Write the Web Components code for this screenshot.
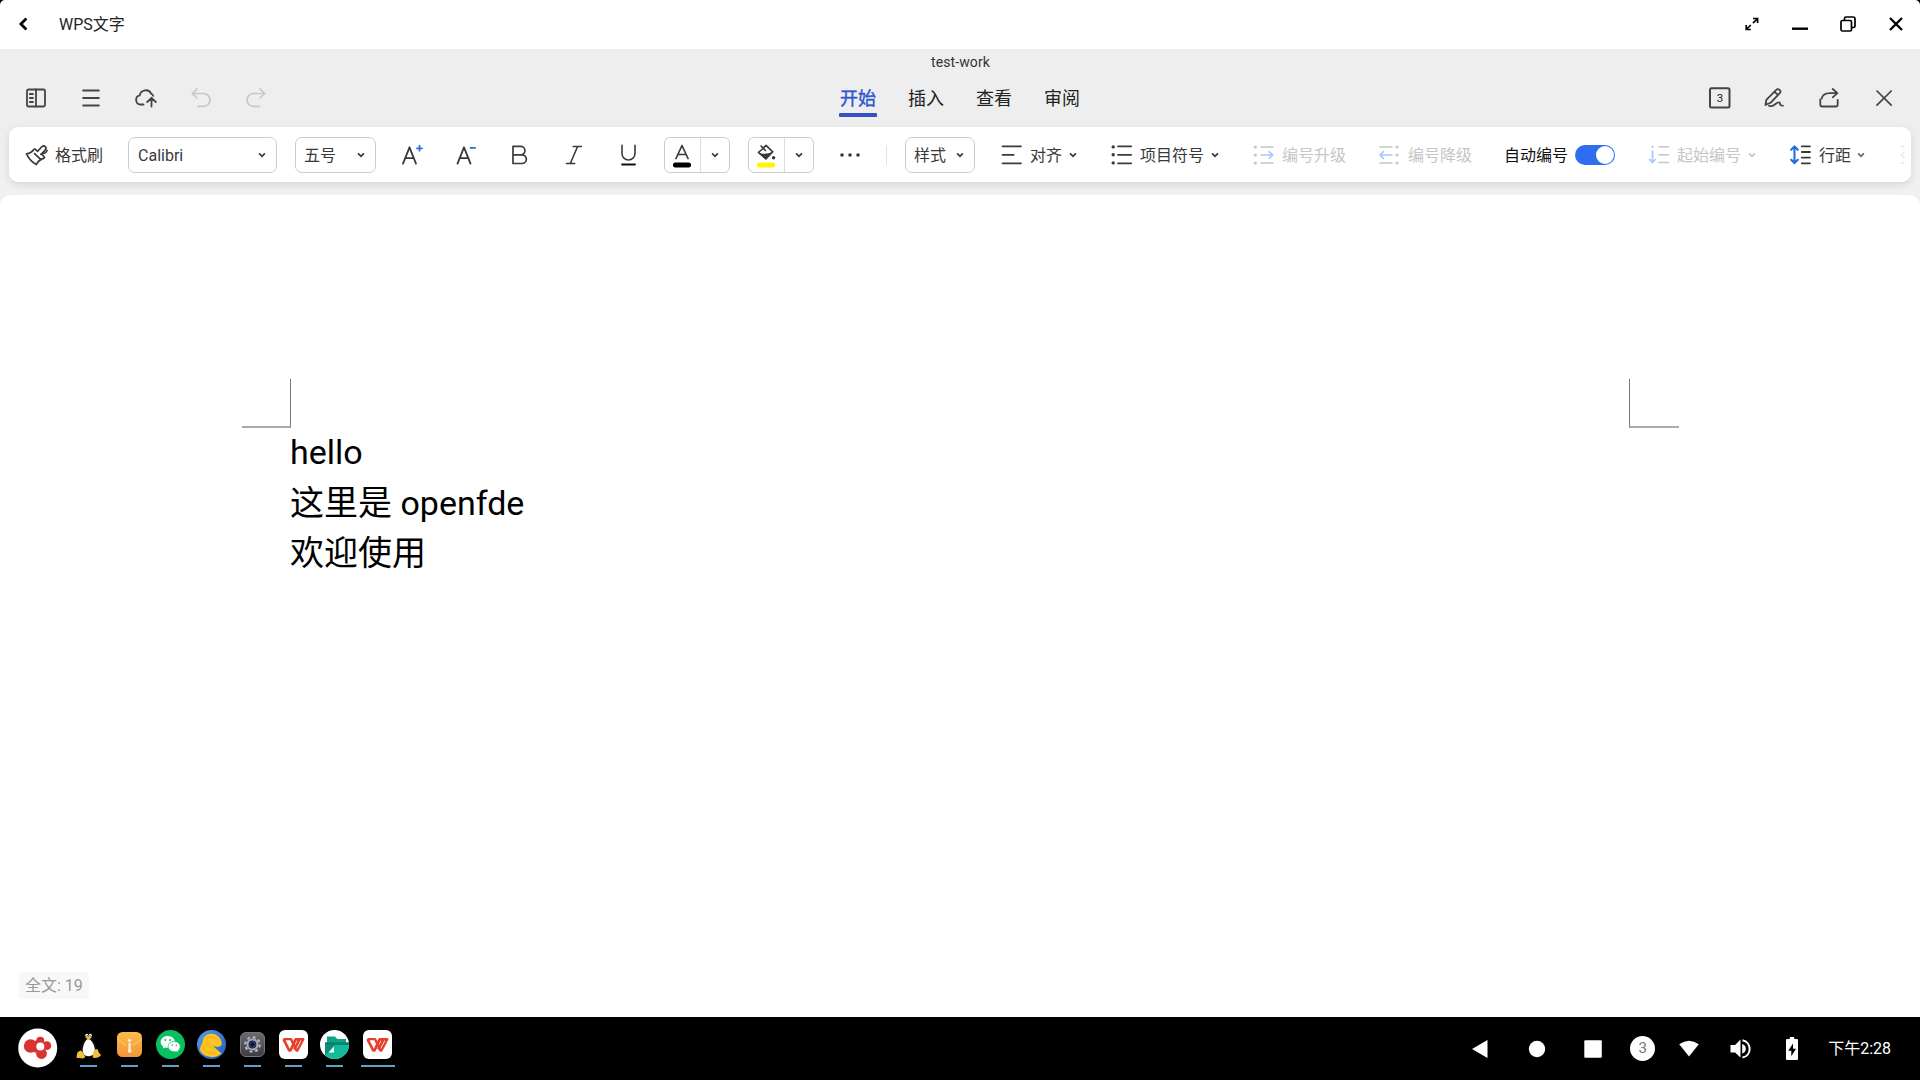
<!DOCTYPE html>
<html lang="zh-CN">
<head>
<meta charset="utf-8">
<title>WPS文字</title>
<style>
html,body{margin:0;height:100%;background:#000;overflow:hidden}
body{font-family:Roboto,"Noto Sans CJK SC",sans-serif;font-size:16px;line-height:1;color:#333}
</style>
</head>
<body>
<desk-screen></desk-screen>
<script>
const S='fill="none" stroke="currentColor" stroke-linecap="round" stroke-linejoin="round"';
const ICONS={
 back:[10,14,`<path d="M8.400 1.500 2.900 7l5.500 5.500" fill="none" stroke="currentColor" stroke-width="2.700"/>`],
 expand:[14,14,`<path d="M8 1.500h4.600V6M12.600 1.500 8 6.100M1.200 8v4.500h4.600M1.200 12.500 5.800 8" fill="none" stroke="currentColor" stroke-width="1.700"/>`],
 min:[16,14,`<path d="M0 11.700h16" stroke="currentColor" stroke-width="2.400"/>`],
 restore:[16,16,`<g fill="none" stroke="currentColor" stroke-width="1.700"><rect x="1" y="4.500" width="10.500" height="10.500" rx="1.500"/><path d="M4.500 4.500V2.500Q4.500 1 6 1h7.300Q15 1 15 2.700V10q0 1.500-1.500 1.500h-2"/></g>`],
 close:[14,14,`<path d="M1 1l12 12M13 1 1 13" fill="none" stroke="currentColor" stroke-width="2.300"/>`],
 side:[20,20,`<g ${S} stroke-width="1.800"><rect x="1" y="1.500" width="18" height="17" rx="1.500"/><path d="M10 1.500v17M3.800 6h3.200M3.800 10h3.200M3.800 14h3.200"/></g>`],
 menu:[18,18,`<path d="M1.200 1.500h15.600M1.200 9h15.600M1.200 16.500h15.600" ${S} stroke-width="2"/>`],
 cloud:[22,20,`<g ${S} stroke-width="1.800"><path d="M8.500 16.500H5.500A4.600 4.600 0 0 1 4.800 7.400 6 6 0 0 1 16.200 5.800c.4 0 1.800.8 2 2"/><path d="M16.500 18.500V10M12.200 14l4.300-4.200L20.800 14"/></g>`],
 undo:[20,20,`<g ${S} stroke-width="1.700"><path d="M6 .9 1.300 5.500 6 10"/><path d="M1.500 5.500H12.500a6.400 6.400 0 0 1 0 12.900H7"/></g>`],
 redo:[20,20,`<g ${S} stroke-width="1.700"><path d="M14 .9l4.700 4.600L14 10"/><path d="M18.500 5.500H7.500a6.400 6.400 0 0 0 0 12.900H13"/></g>`],
 pageno:[22,22,`<rect x="1" y="1.200" width="19.500" height="19.200" rx="1.500" ${S} stroke-width="2"/>`],
 pen:[22,20,`<g ${S} stroke-width="1.800"><path d="M1.500 17l.8-5.200L12 2.200a2.400 2.400 0 0 1 3.800 3L6.500 14.800zM10.300 3.700l3.800 3.200"/><path d="M5 17.700c5.500 2.500 7-4.700 10.500-3.200 1.600.8-1 3.300 3.400 3.200"/></g>`],
 share:[22,20,`<g ${S} stroke-width="1.800"><path d="M1.300 11.500v5q0 2 2 2h13.400q2 0 2-2V12"/><path d="M2.700 10.500C3.500 7 7 5.200 10.700 5.200h7.500M13.700 1l4.700 4.200-4.700 4.200"/></g>`],
 x:[16,16,`<path d="M1 1l14.200 14.200M15.200 1 1 15.200" ${S} stroke-width="1.700"/>`],
 chev:[8,6,`<path d="M1.100 1.400 4 4.300 6.900 1.400" fill="none" stroke="currentColor" stroke-width="1.700"/>`],
 brush:[22,22,`<g ${S} stroke-width="1.700" transform="translate(-.5 -.5)"><path d="M1 10.300c3.500-.3 5.500-1.800 7.300-4.300q.7-1 1.600-.1l2.300 1.900 4.100-4.500q1.800-1.800 3.400-.2 1.700 1.800-.1 3.600l-3.600 3.900 2.600 2.400q.8.800 0 1.600C15.500 15.500 12.500 17.500 10.800 21Q4.500 17.500 1 10.300z"/><path d="M15.300 10.800l4-1.300q1.700-.8 2.300-2.500M9 10.200l6.500 6"/></g>`],
 aplus:[22,20,`<path d="M1 18.600 7.500 2.300 14 18.600M3.300 13.200h8.500" ${S} stroke-width="1.800"/><path d="M14.300 3.300h6.400M17.500 .1v6.400" stroke="#2a6ed6" stroke-width="1.700"/>`],
 aminus:[22,20,`<path d="M1.500 18.600 8 2.300 14.500 18.600M3.800 13.200h8.500" ${S} stroke-width="1.800"/><path d="M13.800 2.800h6" stroke="#2a6ed6" stroke-width="1.700"/>`],
 bold:[17,20,`<path d="M2 1.300h7.700a4.200 4.200 0 0 1 0 8.500H2zM2 9.800h9a4.300 4.300 0 0 1 0 8.700H2z" ${S} stroke-width="1.700"/>`],
 ital:[18,20,`<path d="M8.200 1.500h8.200M1.500 18.500h8.200M12.600 1.500 5.300 18.500" ${S} stroke-width="1.600"/>`],
 under:[17,22,`<path d="M2 1.200v8.300a6.500 6.500 0 0 0 13 0V1.200" ${S} stroke-width="1.600"/><path d="M2 20.500h13" stroke="#111" stroke-width="1.800" stroke-linecap="round"/>`],
 color:[20,24,`<path d="M4 14.500 10 1.500l6 13M6.200 10.500h7.600" ${S} stroke-width="1.700"/><rect x="1" y="18.500" width="18" height="5" rx="2.300" fill="#000"/>`],
 fill:[20,24,`<path d="M5 2l4.500 4.500M5.300 6l4.700-4.600 6.800 6.400L9.900 15 2.500 8.300z" ${S} stroke-width="1.600"/><path d="M1.500 8.500q7.500 2.800 15-.5L10 15.500z" fill="currentColor"/><circle cx="17.600" cy="13.700" r="1.700" fill="currentColor"/><rect x="1" y="18.500" width="18" height="5" rx="2.300" fill="#fff500"/>`],
 dots:[22,6,`<g fill="currentColor"><circle cx="3" cy="3" r="1.800"/><circle cx="11" cy="3" r="1.800"/><circle cx="19" cy="3" r="1.800"/></g>`],
 align:[22,20,`<path d="M1.500 1.300h18.500M1.500 9.800h11.200M1.500 18.300h18.500" ${S} stroke-width="1.700"/>`],
 bullets:[22,20,`<path d="M7 1.300h13.200M7 9.800h13.200M7 18.300h13.200" ${S} stroke-width="1.700"/><g fill="currentColor"><circle cx="2.200" cy="1.900" r="1.700"/><circle cx="2.200" cy="9.800" r="1.700"/><circle cx="2.200" cy="17.900" r="1.700"/></g>`],
 numup:[22,20,`<path d="M8 2h12M8 18h12" ${S} stroke-width="1.600"/><g fill="currentColor"><circle cx="2.300" cy="2" r="1.600"/><circle cx="2.300" cy="10" r="1.600"/><circle cx="2.300" cy="18" r="1.600"/></g><path d="M7.500 10h12M15.700 6.200l4 3.800-4 3.800" fill="none" stroke="#a9c9fa" stroke-width="1.600"/>`],
 numdown:[22,20,`<path d="M2 2h12M2 18h12" ${S} stroke-width="1.600"/><g fill="currentColor"><circle cx="19" cy="2" r="1.600"/><circle cx="19" cy="10" r="1.600"/><circle cx="19" cy="18" r="1.600"/></g><path d="M2 10h12.500M6 6.200l-4 3.800 4 3.800" fill="none" stroke="#a9c9fa" stroke-width="1.600"/>`],
 start:[22,20,`<path d="M11 1.800h9.500M11 9.800h9.500M11 17.500h9.500" ${S} stroke-width="1.600"/><path d="M4.500 5.500v12M1.300 14l3.200 3.500L7.700 14M4.500 1v2" fill="none" stroke="#a9c9fa" stroke-width="1.800"/>`],
 spacing:[22,20,`<path d="M11.800 1.300h8.200M11.800 7h8.200M11.800 12.600h8.200M11.800 18.300h8.200" ${S} stroke-width="1.800"/><path d="M4.500 2v15.500M1.200 4.800 4.500 1.500l3.300 3.300M1.200 14.800l3.300 3.300 3.300-3.300" fill="none" stroke="#1f6fe0" stroke-width="2.100" stroke-linecap="round"/>`],
 more:[6,20,`<path d="M1 1.500h3.500M4.500 7 1 10l3.500 3M1 18h3.500" fill="none" stroke="currentColor" stroke-width="1.400"/>`],
 launcher:[40,40,`<circle cx="19.700" cy="20" r="19.500" fill="#fff"/><g fill="#d73430"><circle cx="12.600" cy="18" r="6.800"/><circle cx="22.300" cy="12.700" r="4"/><circle cx="28.800" cy="17.700" r="4.400"/><circle cx="23.500" cy="25.500" r="5.400"/><path d="M12 22l6 3 8-11-8-2z"/></g><circle cx="22.300" cy="18.600" r="4" fill="#fff"/>`],
 tux:[29,29,`<path d="M14.500 2.500c-3 0-3.600 2.500-3.400 5 .2 3-4.500 7-4.700 12 0 5 3.500 7.500 8.100 7.500s8.100-2.500 8.100-7.500c0-5-4.900-9-4.700-12 .2-2.500-.4-5-3.400-5z" fill="#111"/><path d="M14.300 9c-2.500 0-5.600 6.500-5.600 11s2.700 6.200 5.700 6.200 6.500-1.800 6.500-6.200S16.900 9 14.300 9z" fill="#fff"/><circle cx="12.800" cy="5.300" r="1.500" fill="#fff"/><circle cx="16.300" cy="5.300" r="1.500" fill="#fff"/><circle cx="13.100" cy="5.500" r=".6"/><circle cx="16" cy="5.500" r=".6"/><path d="M11.500 7.500q3-2.500 6.200 0l-3 2.500z" fill="#f5b921"/><path d="M3.500 22.200l3-1.700c2 1 4 4 4.700 6.300-1 2.700-4 1.200-8.200 1.200-1.300-1.500.3-3.500.5-5.800zM19.500 21.500c.5-2.500 2-1.500 4-2.500l1.300 3.400L27 25c-1 2-5 3.500-7 3-2-.5-1-4-.5-6.500z" fill="#f7bd38"/>`],
 mail:[29,29,`<defs><linearGradient id="g" x1="0" y1="0" x2="0" y2="1"><stop stop-color="#f9bc48"/><stop offset="1" stop-color="#f2953b"/></linearGradient></defs><rect x="2" y="2" width="25" height="25" rx="5.500" fill="url(#g)"/><path d="M2.500 9l9 6.500M26.500 9l-9 6.500" stroke="#fbcf78" stroke-width="1" fill="none"/><circle cx="14.600" cy="10.500" r="1.800" fill="#fbe6c4"/><path d="M14.600 13v9" stroke="#fdf0da" stroke-width="2.200"/><path d="M13 21h3.400" stroke="#fdf0da" stroke-width="3"/>`],
 wechat:[29,29,`<circle cx="14.500" cy="14.500" r="14.500" fill="#07c160"/><path d="M11.700 6C7.500 6 4.700 8.700 4.700 12c0 1.900 1 3.500 2.500 4.600l-.6 2 2.500-1.200c.8.200 1.700.3 2.600.3 4.200 0 7.200-2.500 7.200-5.700S15.900 6 11.700 6z" fill="#fff"/><path d="M18.400 11.400c-3.600 0-6.200 2.300-6.200 5.200s2.600 5.200 6.200 5.200c.8 0 1.400-.1 2.100-.3l2 1-.5-1.700c1.400-1 2.300-2.500 2.300-4.200 0-2.900-2.600-5.200-5.900-5.200z" fill="#fff" stroke="#07c160" stroke-width=".7"/><g fill="#07c160"><circle cx="9.300" cy="10" r="1"/><circle cx="14" cy="10" r="1"/><circle cx="16.300" cy="15.200" r=".8"/><circle cx="20.400" cy="15.200" r=".8"/></g>`],
 bird:[29,29,`<defs><linearGradient id="b" x1="0" y1="0" x2="1" y2="1"><stop stop-color="#5b9be8"/><stop offset="1" stop-color="#1f5fc4"/></linearGradient></defs><circle cx="14.500" cy="14.500" r="14.500" fill="url(#b)"/><path d="M2.800 20C3.500 15 5.800 13 6 10 6.500 6 11 3.200 15.500 3.800c5 .6 8.500 4.500 9.300 8.700l-.5 3.300-4 1.300-4.300-1.200 3.300 3.200 5.200 4.200c-2.500 2.800-6 4-10 3.700-5.500-.3-9.700-3-11.700-7z" fill="#fbc423"/><path d="M8.500 8.500c3.500-2.500 7.500-1.500 10.500.5M5.500 17c2 5 8 7 13 6M9 12.500c1 3.500 4 5.500 7 5.500" stroke="#f2b013" stroke-width="1" fill="none"/>`],
 gear:[29,29,`<defs><linearGradient id="k" x1="0" y1="0" x2="0" y2="1"><stop stop-color="#6c6c70"/><stop offset="1" stop-color="#3c3c40"/></linearGradient></defs><rect x="2.500" y="2.500" width="24" height="24" rx="5.500" fill="url(#k)" stroke="#77777b"/><circle cx="14.500" cy="14.500" r="7.300" fill="none" stroke="#b9bfcb" stroke-width="2" stroke-dasharray="2.870 2.870"/><circle cx="14.500" cy="14.500" r="5" fill="#16181f" stroke="#a0a8ba" stroke-width="2.200"/><circle cx="14.500" cy="14.500" r="2.800" fill="none" stroke="#3c4b9c" stroke-width="1"/>`],
 wps:[29,29,`<rect width="29" height="29" rx="6" fill="#fff"/><g fill="none" stroke="#e63f2c" stroke-linejoin="round"><path d="M4.500 9.200 10.200 20.500h1.200L16.700 9.300h3.800L15.300 19.500" stroke-width="2.700"/><path d="M4.500 9.100h8.300M12.200 9.500l5.200 11h1L24.300 9.200H20" stroke-width="2.400"/></g>`],
 files:[29,29,`<defs><clipPath id="c"><circle cx="14.500" cy="14.500" r="14.500"/></clipPath></defs><circle cx="14.500" cy="14.500" r="14.500" fill="#fff"/><g clip-path="url(#c)"><path d="M7 6.500h8l2.200 2.500H26v8H7z" fill="#10a487"/><path d="M5 13h25v17H5z" fill="#12bb9b"/><path d="M5 12.300h24v2.700H5z" fill="#0b7f6d"/><path d="M5 15v10l4-3 5.500-7z" fill="#0b8f79"/><path d="M14 16.500v6H8.500z" fill="#fff"/></g>`],
 tri:[18,20,`<path d="M1 10 16.500 1v18z" fill="#fff"/>`],
 dot:[18,18,`<circle cx="9" cy="9" r="8.200" fill="#fff"/>`],
 sq:[18,18,`<rect x=".3" y=".3" width="17.500" height="17.500" rx="1" fill="#fff"/>`],
 wifi:[20,18,`<path d="M.2 4.300Q10-2.800 19.800 4.300L10 16.500z" fill="#fff"/>`],
 vol:[22,22,`<path d="M.5 7h4.600L10.500 1.600v18L5.100 14.500H.5z" fill="#fff"/><path d="M12.200 6q3.600 1 3.600 4.800T12.200 15.500z" fill="#fff"/><path d="M12.500 2.200c9.500 2 9.500 15.500 0 17.300" fill="none" stroke="#fff" stroke-width="2"/>`],
 batt:[12,24,`<path d="M3.800 0h4.400v2H11q1 0 1 1v19q0 1-1 1H1q-1 0-1-1V3q0-1 1-1h2.800z" fill="#fff"/><path d="M7 6.500 2.200 13.700H5.300V19.300L10 11.800H7z" fill="#000"/>`]
};
class UiIcon extends HTMLElement{
 constructor(){super();this.attachShadow({mode:'open'})}
 connectedCallback(){
  const [w,h,b]=ICONS[this.getAttribute('name')];
  this.shadowRoot.innerHTML=`<style>:host{display:block;flex:none;width:${w}px;height:${h}px}svg{display:block;overflow:visible}</style><svg width="${w}" height="${h}" viewBox="0 0 ${w} ${h}">${b}</svg>`;
 }
}
customElements.define('ui-icon',UiIcon);

function define(name,html){
 const t=document.createElement('template');t.innerHTML=html;
 customElements.define(name,class extends HTMLElement{
  constructor(){super();this.attachShadow({mode:'open'}).append(t.content.cloneNode(true))}
 });
}

/* icon + label + optional chevron */
define('tool-button',`<style>:host{display:flex;align-items:center;gap:7px;flex:none;white-space:nowrap}::slotted(span){padding-top:2px}</style><slot></slot>`);
/* bordered drop-down */
define('select-box',`<style>:host{box-sizing:border-box;display:flex;flex:none;align-items:center;justify-content:space-between;height:36px;padding:0 10px 0 9px;border:1px solid #ccc;border-radius:7px;white-space:nowrap}span{padding-top:2px}</style><span><slot></slot></span><ui-icon name="chev"></ui-icon>`);
/* icon button with a separate drop-down part */
define('split-button',`<style>:host{box-sizing:border-box;display:flex;flex:none;width:66px;height:36px;border:1px solid #ccc;border-radius:6px}
.a{box-sizing:border-box;width:36px;border-right:1px solid #ddd;display:flex;justify-content:center;padding:6px 1px 0 0}.b{flex:1;display:flex;align-items:center;justify-content:center}</style><div class="a"><slot></slot></div><div class="b"><ui-icon name="chev"></ui-icon></div>`);
define('toggle-switch',`<style>:host{box-sizing:border-box;display:flex;justify-content:flex-end;width:40px;height:20px;padding:1px;border-radius:10px;background:#2f6df0}i{width:18px;height:18px;border-radius:50%;background:#fff}</style><i></i>`);
define('tab-item',`<style>:host{display:flex;flex-direction:column;align-items:center;width:38px;font-size:18px;line-height:26px;color:#222}
i{width:38px;height:4px;border-radius:1px;margin-top:1px}:host([active]){color:#2f55cf}:host([active]) span{-webkit-text-stroke:.4px currentColor}:host([active]) i{background:#3450c4}</style><span><slot></slot></span><i></i>`);

define('title-bar',`<style>:host{box-sizing:border-box;display:flex;align-items:center;height:49px;padding:0 17px 1px 18px;background:#fff;color:#000;border-radius:5px 5px 0 0}
.t{margin-left:31px;flex:1;color:#222;padding-top:2px}.w{display:flex;align-items:center}</style>
<ui-icon name="back"></ui-icon><div class="t">WPS文字</div>
<div class="w"><ui-icon name="expand"></ui-icon><ui-icon name="min" style="margin-left:33px"></ui-icon><ui-icon name="restore" style="margin-left:32px"></ui-icon><ui-icon name="close" style="margin-left:33px"></ui-icon></div>`);

define('app-header',`<style>:host{display:block;height:78px;color:#444}
.n{text-align:center;font-size:14px;line-height:16px;padding-top:5px;padding-left:1px;letter-spacing:.1px;color:#333}
.r{display:grid;grid-template-columns:1fr auto 1fr;height:50px;margin-top:4px}
.l,.e{display:flex;align-items:center;height:48px}.e{justify-content:flex-end;padding-right:28px}.l{padding-left:26px}
.tabs{display:flex;gap:30px;padding-top:12px}.off{color:#c8c8c8}
.pn{display:grid;place-items:center}.pn>*{grid-area:1/1}.pn span{font-size:11.500px;padding-top:2px;color:#222}</style>
<div class="n">test-work</div>
<div class="r"><div class="l"><ui-icon name="side"></ui-icon><ui-icon name="menu" style="margin-left:36px"></ui-icon><ui-icon name="cloud" style="margin-left:35px"></ui-icon><ui-icon class="off" name="undo" style="margin-left:34px"></ui-icon><ui-icon class="off" name="redo" style="margin-left:35px"></ui-icon></div>
<div class="tabs"><tab-item active>开始</tab-item><tab-item>插入</tab-item><tab-item>查看</tab-item><tab-item>审阅</tab-item></div>
<div class="e"><div class="pn"><ui-icon name="pageno"></ui-icon><span>3</span></div><ui-icon name="pen" style="margin-left:33px"></ui-icon><ui-icon name="share" style="margin-left:33px"></ui-icon><ui-icon name="x" style="margin-left:35px"></ui-icon></div></div>`);

define('tool-bar',`<style>:host{box-sizing:border-box;display:flex;align-items:center;height:55px;margin:0 9px;padding-left:17px;background:#fff;border-radius:9px;box-shadow:0 3px 8px rgba(0,0,0,.11);color:#3a3a3a;overflow:hidden}
.off{color:#c6c6c6}.sep{width:1px;height:20px;background:#e2e2e2;margin-left:25px}</style>
<tool-button><ui-icon name="brush"></ui-icon><span>格式刷</span></tool-button>
<select-box style="margin-left:25px;width:149px">Calibri</select-box>
<select-box style="margin-left:18px;width:81px;padding-left:8px">五号</select-box>
<ui-icon name="aplus" style="margin-left:26px"></ui-icon>
<ui-icon name="aminus" style="margin-left:32px"></ui-icon>
<ui-icon name="bold" style="margin-left:33px"></ui-icon>
<ui-icon name="ital" style="margin-left:37px"></ui-icon>
<ui-icon name="under" style="margin-left:37px"></ui-icon>
<split-button style="margin-left:27px"><ui-icon name="color"></ui-icon></split-button>
<split-button style="margin-left:18px"><ui-icon name="fill"></ui-icon></split-button>
<ui-icon name="dots" style="margin-left:25px"></ui-icon>
<div class="sep"></div>
<select-box style="margin-left:18px;width:70px;padding-left:8px">样式</select-box>
<tool-button style="margin-left:26px"><ui-icon name="align"></ui-icon><span>对齐</span><ui-icon name="chev"></ui-icon></tool-button>
<tool-button style="margin-left:34px"><ui-icon name="bullets"></ui-icon><span>项目符号</span><ui-icon name="chev"></ui-icon></tool-button>
<tool-button class="off" style="margin-left:34px"><ui-icon name="numup"></ui-icon><span>编号升级</span></tool-button>
<tool-button class="off" style="margin-left:32px"><ui-icon name="numdown"></ui-icon><span style="margin-left:1px">编号降级</span></tool-button>
<tool-button style="margin-left:32px;color:#111"><span>自动编号</span><toggle-switch></toggle-switch></tool-button>
<tool-button class="off" style="margin-left:33px"><ui-icon name="start"></ui-icon><span>起始编号</span><ui-icon name="chev"></ui-icon></tool-button>
<tool-button style="margin-left:34px"><ui-icon name="spacing"></ui-icon><span>行距</span><ui-icon name="chev" style="color:#666;margin-left:-1px"></ui-icon></tool-button>
<ui-icon name="more" style="margin-left:35px;color:#e6e6e6"></ui-icon>`);

define('doc-page',`<style>:host{box-sizing:border-box;display:flex;flex-direction:column;flex:1;margin-top:13px;background:#fff;border-radius:10px 10px 0 0;padding:184px 0 18px}
.m{display:flex;justify-content:space-between;padding:0 241px 0 242px}.m i{box-sizing:border-box;width:49px;height:49px;border-bottom:2px solid #aaa}
.m i:first-child{border-right:1px solid #777}.m i:last-child{width:50px;border-left:1px solid #777}
.t{flex:1;margin-top:-1px;padding-left:290px;font-size:34px;line-height:50px;color:#000}p{margin:0}p:first-child{margin-bottom:1px}
.c{align-self:flex-start;box-sizing:border-box;margin-left:19px;width:70px;height:27px;padding-left:6px;line-height:28px;background:#f8f8f8;color:#999;border-radius:2px;white-space:nowrap}</style>
<div class="m"><i></i><i></i></div>
<div class="t"><p>hello</p><p>这里是 openfde</p><p>欢迎使用</p></div>
<div class="c">全文: 19</div>`);

define('dock-item',`<style>:host{display:flex;flex-direction:column;align-items:center;width:41px;padding-top:13px}i{width:17px;height:2px;margin-top:6px;background:#64a0c4}:host([active]) i{width:34px}</style><slot></slot><i></i>`);
define('task-bar',`<style>:host{display:flex;height:63px;background:#000;color:#fff;padding:0 29px 0 18px}
.d{display:flex;margin-left:10px;flex:1}.s{display:flex;align-items:center}.k{display:flex;align-items:center;justify-content:center;width:25px;height:25px;border-radius:50%;background:#fff;color:#777;font-size:15px;font-weight:400}</style>
<ui-icon name="launcher" style="margin-top:11px"></ui-icon>
<div class="d"><dock-item><ui-icon name="tux"></ui-icon></dock-item><dock-item><ui-icon name="mail"></ui-icon></dock-item><dock-item><ui-icon name="wechat"></ui-icon></dock-item><dock-item><ui-icon name="bird"></ui-icon></dock-item><dock-item><ui-icon name="gear"></ui-icon></dock-item><dock-item><ui-icon name="wps"></ui-icon></dock-item><dock-item><ui-icon name="files"></ui-icon></dock-item><dock-item active style="margin-left:2px"><ui-icon name="wps"></ui-icon></dock-item></div>
<div class="s"><ui-icon name="tri"></ui-icon><ui-icon name="dot" style="margin-left:39px"></ui-icon><ui-icon name="sq" style="margin-left:38px"></ui-icon><div class="k" style="margin-left:28px">3</div><ui-icon name="wifi" style="margin-left:24px"></ui-icon><ui-icon name="vol" style="margin-left:31px"></ui-icon><ui-icon name="batt" style="margin-left:34px"></ui-icon><span style="margin-left:30px">下午2:28</span></div>`);

define('desk-screen',`<style>:host{display:flex;flex-direction:column;width:1920px;height:1080px;background:#000}.a{flex:1;display:flex;flex-direction:column;background:linear-gradient(#eee 0 80px,#f1f1f1 130px)}</style>
<title-bar></title-bar><div class="a"><app-header></app-header><tool-bar></tool-bar><doc-page></doc-page></div><task-bar></task-bar>`);
</script>
</body>
</html>
